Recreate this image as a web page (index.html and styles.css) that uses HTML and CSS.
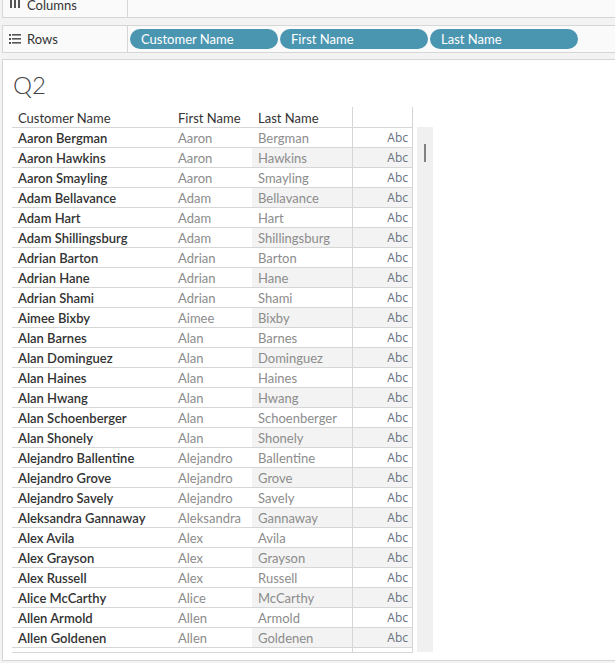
FILE: index.html
```html
<!DOCTYPE html>
<html>
<head>
<meta charset="utf-8">
<link rel="stylesheet" href="styles.css">
</head>
<body>
<div class="shelf shelf-columns">
  <div class="shelf-label">
    <svg class="icon" width="12" height="12" viewBox="0 0 12 12"><rect x="1" y="0" width="2" height="10" fill="#555"/><rect x="5" y="0" width="2" height="10" fill="#555"/><rect x="9" y="0" width="2" height="10" fill="#555"/></svg>
    <span>Columns</span>
  </div>
  <div class="shelf-pills"></div>
</div>
<div class="shelf shelf-rows">
  <div class="shelf-label">
    <svg class="icon" width="12" height="12" viewBox="0 0 12 12"><rect x="0" y="1" width="2" height="2" fill="#555"/><rect x="3" y="1" width="9" height="1.6" fill="#555"/><rect x="0" y="5" width="2" height="2" fill="#555"/><rect x="3" y="5" width="9" height="1.6" fill="#555"/><rect x="0" y="9" width="2" height="2" fill="#555"/><rect x="3" y="9" width="9" height="1.6" fill="#555"/></svg>
    <span>Rows</span>
  </div>
  <div class="shelf-pills">
    <div class="pill">Customer Name</div>
    <div class="pill">First Name</div>
    <div class="pill">Last Name</div>
  </div>
</div>
<div class="canvas">
  <div class="title">Q2</div>
  <div class="viz">
    <div class="table">
      <div class="row head"><div class="c1">Customer Name</div><div class="c2">First Name</div><div class="c3">Last Name</div><div class="c4"></div></div>
      <div class="row"><div class="c1">Aaron Bergman</div><div class="c2">Aaron</div><div class="c3">Bergman</div><div class="c4">Abc</div></div>
      <div class="row"><div class="c1">Aaron Hawkins</div><div class="c2">Aaron</div><div class="c3">Hawkins</div><div class="c4">Abc</div></div>
      <div class="row"><div class="c1">Aaron Smayling</div><div class="c2">Aaron</div><div class="c3">Smayling</div><div class="c4">Abc</div></div>
      <div class="row"><div class="c1">Adam Bellavance</div><div class="c2">Adam</div><div class="c3">Bellavance</div><div class="c4">Abc</div></div>
      <div class="row"><div class="c1">Adam Hart</div><div class="c2">Adam</div><div class="c3">Hart</div><div class="c4">Abc</div></div>
      <div class="row"><div class="c1">Adam Shillingsburg</div><div class="c2">Adam</div><div class="c3">Shillingsburg</div><div class="c4">Abc</div></div>
      <div class="row"><div class="c1">Adrian Barton</div><div class="c2">Adrian</div><div class="c3">Barton</div><div class="c4">Abc</div></div>
      <div class="row"><div class="c1">Adrian Hane</div><div class="c2">Adrian</div><div class="c3">Hane</div><div class="c4">Abc</div></div>
      <div class="row"><div class="c1">Adrian Shami</div><div class="c2">Adrian</div><div class="c3">Shami</div><div class="c4">Abc</div></div>
      <div class="row"><div class="c1">Aimee Bixby</div><div class="c2">Aimee</div><div class="c3">Bixby</div><div class="c4">Abc</div></div>
      <div class="row"><div class="c1">Alan Barnes</div><div class="c2">Alan</div><div class="c3">Barnes</div><div class="c4">Abc</div></div>
      <div class="row"><div class="c1">Alan Dominguez</div><div class="c2">Alan</div><div class="c3">Dominguez</div><div class="c4">Abc</div></div>
      <div class="row"><div class="c1">Alan Haines</div><div class="c2">Alan</div><div class="c3">Haines</div><div class="c4">Abc</div></div>
      <div class="row"><div class="c1">Alan Hwang</div><div class="c2">Alan</div><div class="c3">Hwang</div><div class="c4">Abc</div></div>
      <div class="row"><div class="c1">Alan Schoenberger</div><div class="c2">Alan</div><div class="c3">Schoenberger</div><div class="c4">Abc</div></div>
      <div class="row"><div class="c1">Alan Shonely</div><div class="c2">Alan</div><div class="c3">Shonely</div><div class="c4">Abc</div></div>
      <div class="row"><div class="c1">Alejandro Ballentine</div><div class="c2">Alejandro</div><div class="c3">Ballentine</div><div class="c4">Abc</div></div>
      <div class="row"><div class="c1">Alejandro Grove</div><div class="c2">Alejandro</div><div class="c3">Grove</div><div class="c4">Abc</div></div>
      <div class="row"><div class="c1">Alejandro Savely</div><div class="c2">Alejandro</div><div class="c3">Savely</div><div class="c4">Abc</div></div>
      <div class="row"><div class="c1">Aleksandra Gannaway</div><div class="c2">Aleksandra</div><div class="c3">Gannaway</div><div class="c4">Abc</div></div>
      <div class="row"><div class="c1">Alex Avila</div><div class="c2">Alex</div><div class="c3">Avila</div><div class="c4">Abc</div></div>
      <div class="row"><div class="c1">Alex Grayson</div><div class="c2">Alex</div><div class="c3">Grayson</div><div class="c4">Abc</div></div>
      <div class="row"><div class="c1">Alex Russell</div><div class="c2">Alex</div><div class="c3">Russell</div><div class="c4">Abc</div></div>
      <div class="row"><div class="c1">Alice McCarthy</div><div class="c2">Alice</div><div class="c3">McCarthy</div><div class="c4">Abc</div></div>
      <div class="row"><div class="c1">Allen Armold</div><div class="c2">Allen</div><div class="c3">Armold</div><div class="c4">Abc</div></div>
      <div class="row"><div class="c1">Allen Goldenen</div><div class="c2">Allen</div><div class="c3">Goldenen</div><div class="c4">Abc</div></div>
      <div class="row partial"><div class="c1"></div><div class="c2"></div><div class="c3"></div><div class="c4"></div></div>
    </div>
    <div class="scrollbar"><div class="thumb"></div></div>
  </div>
</div>
</body>
</html>
```
FILE: styles.css
```css
html, body {
  margin: 0;
  padding: 0;
  background: #f3f3f3;
  overflow: hidden;
  font-family: Lato, "Liberation Sans", sans-serif;
  color: #333;
}

.shelf {
  display: flex;
  margin-left: 2px;
  border: 1px solid #d6d6d6;
  border-right: none;
  background: #fafafa;
  height: 25px;
}
.shelf-columns {
  margin-top: -9px;
}
.shelf-rows {
  margin-top: 7px;
  height: 26px;
}
.shelf-label {
  width: 124px;
  border-right: 1px solid #d6d6d6;
  display: flex;
  align-items: center;
  font-size: 13px;
  color: #333;
}
.shelf-label .icon {
  margin-left: 6px;
  margin-right: 6px;
  flex: none;
}
.shelf-columns .shelf-label .icon {
  margin-top: -2px;
}
.shelf-pills {
  display: flex;
  align-items: flex-start;
  gap: 2px;
  padding-left: 2px;
  padding-top: 3px;
  flex: 1;
}
.pill {
  width: 148px;
  height: 20px;
  box-sizing: border-box;
  border-radius: 10px;
  background: #4a96b1;
  color: #fff;
  font-size: 13px;
  line-height: 20px;
  padding-left: 11px;
}

.canvas {
  margin-top: 6px;
  margin-left: 2px;
  border: 1px solid #d6d6d6;
  border-right: none;
  background: #fff;
  height: 600px;
  overflow: hidden;
}
.title {
  margin: 10px 0 0 10px;
  height: 29px;
  line-height: 29px;
  font-size: 24px;
  font-weight: 300;
  color: #444;
}
.viz {
  display: flex;
  align-items: flex-start;
  margin-top: 8px;
  margin-left: 9px;
}
.table {
  width: 401px;
}
.row {
  display: grid;
  grid-template-columns: 160px 80px 100px 61px;
  height: 19px;
  border-bottom: 1px solid #d6d6d6;
  font-size: 13px;
  line-height: 21px;
}
.row.head {
  height: 20px;
  line-height: 23px;
}
.row.partial {
  height: 4px;
}
.row > div {
  white-space: nowrap;
  overflow: hidden;
}
.c1 {
  padding-left: 6px;
  color: #333;
  font-weight: 600;
}
.c2, .c3 {
  padding-left: 6px;
  color: #8c8c8c;
}
.head .c1, .head .c2, .head .c3 {
  color: #333;
  font-weight: 400;
}
.c4 {
  box-sizing: border-box;
  border-left: 1px solid #d6d6d6;
  border-right: 1px solid #d6d6d6;
  text-align: right;
  padding-right: 4px;
  font-family: "Open Sans", "DejaVu Sans", sans-serif;
  font-size: 12px;
  line-height: 19px;
  color: #667080;
}
.row:nth-child(odd):not(.head):not(.partial) .c3,
.row:nth-child(odd):not(.head):not(.partial) .c4 {
  background: #f3f3f3;
}

.scrollbar {
  margin-left: 4px;
  margin-top: 20px;
  width: 16px;
  height: 525px;
  background: #f0f0f0;
  padding-top: 17px;
  box-sizing: border-box;
}
.thumb {
  margin-left: 7px;
  width: 2px;
  height: 18px;
  background: #808080;
}
```
